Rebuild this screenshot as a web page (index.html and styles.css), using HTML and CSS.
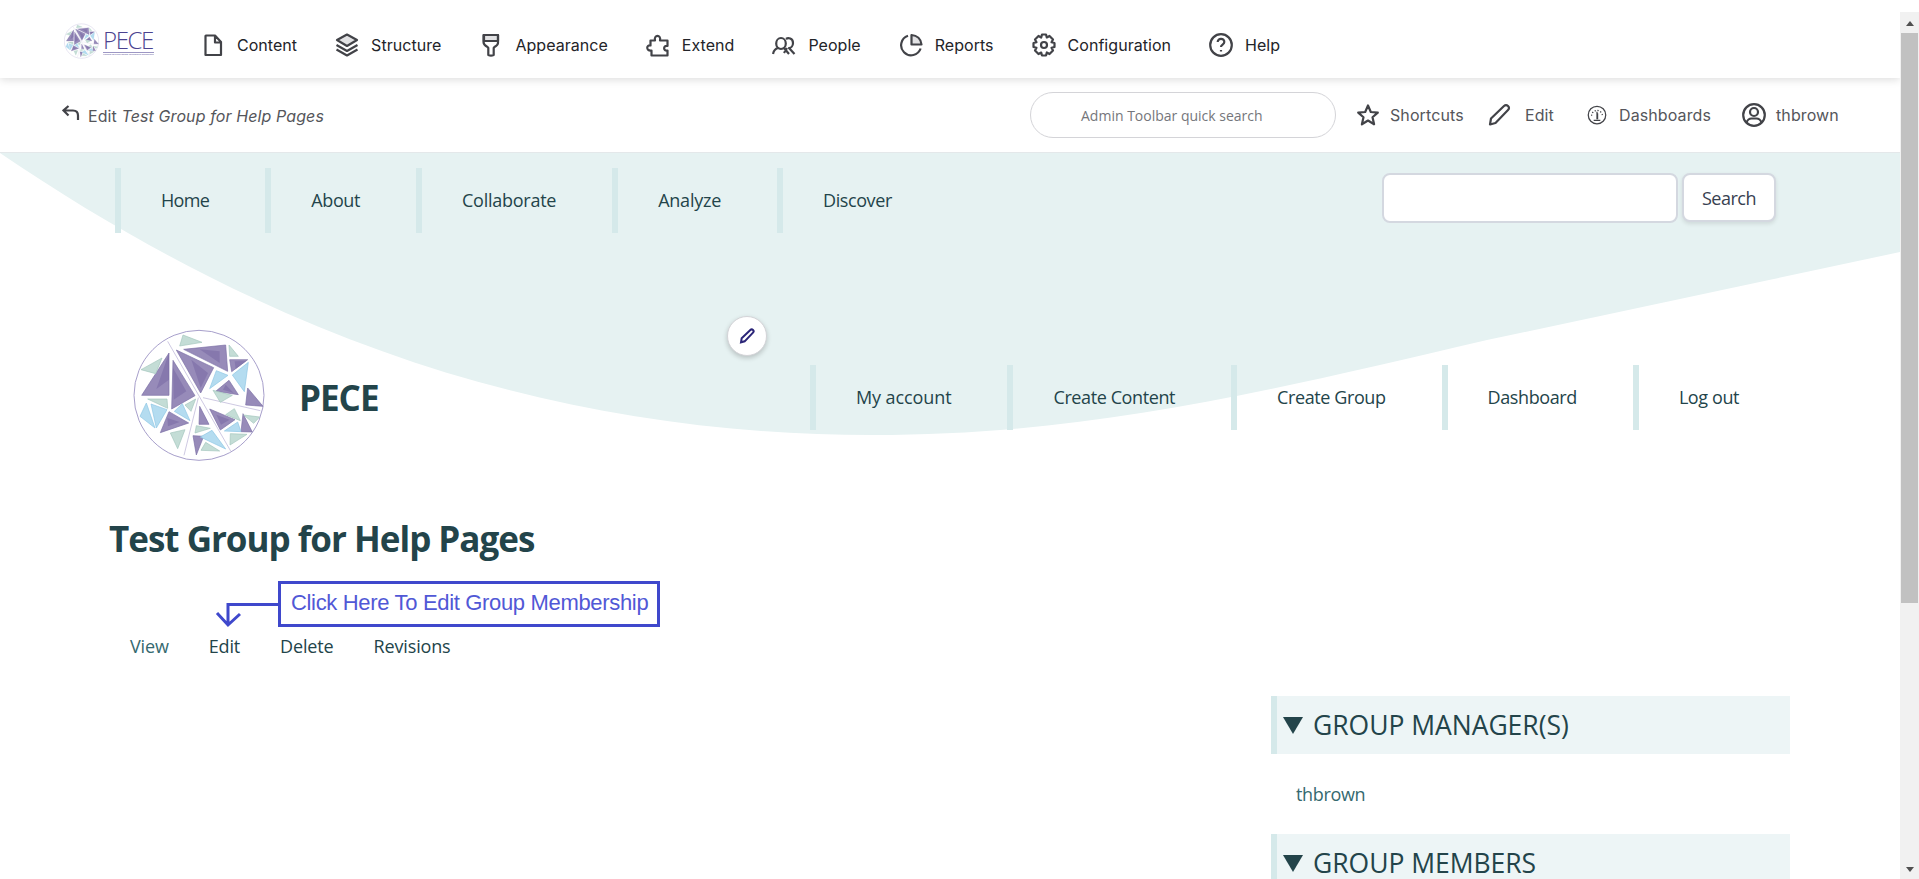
FILE: index.html
```html
<!DOCTYPE html>
<html lang="en">
<head>
<meta charset="utf-8">
<title>Test Group for Help Pages | PECE</title>
<link rel="stylesheet" href="styles.css">
</head>
<body>
<svg class="defs" aria-hidden="true">
  <symbol id="mosaic" viewBox="40 58 396 396">
    <circle cx="238" cy="257" r="195" fill="#fff" stroke="#a79fcb" stroke-width="3"/>
    <g fill="none" stroke="#b5aed3" stroke-width="2">
      <path d="M144 95 333 424M236 264 193 437M250 264 422 303"/>
    </g>
    <g fill="#978bb9" stroke="#7b6fa6" stroke-width="2">
      <path d="M148 130V257H66ZM160 152 226 258 156 298ZM170 121 282 174 243 250ZM192 119 318 106 324 185ZM330 150 384 150 336 186ZM328 212 356 255 288 245ZM384 235 430 290 378 286ZM148 306 207 340 122 369ZM240 290 268 344 238 344ZM270 298 346 330 302 361ZM220 378 252 380 230 436ZM370 312 398 367 364 366Z"/>
    </g>
    <g fill="#71629f" opacity=".45">
      <path d="M148 130V210L110 238ZM160 175 200 245 162 270ZM215 150 265 190 243 235ZM240 119 300 125 300 160ZM345 155 380 154 348 178ZM318 225 342 250 310 240ZM143 325 180 337 145 350ZM290 315 330 330 304 345Z"/>
    </g>
    <g fill="#b4dcf0" stroke="#8cc5e4" stroke-width="2">
      <path d="M290 183 325 197 270 237ZM386 158 374 246 338 196ZM80 280 106 355 61 320ZM94 283 142 300 110 355ZM188 282 211 333 164 305ZM277 362 318 418 242 382ZM354 337 364 366 314 364Z"/>
    </g>
    <g fill="#c4ddd6" stroke="#a3c6bc" stroke-width="2">
      <path d="M190 76 247 98 180 109ZM328 106 356 140 330 140ZM127 145 108 192 64 180ZM280 242 338 257 302 278ZM84 268 142 268 144 296ZM228 268 214 305 196 286ZM344 297 362 333 318 315ZM372 316 420 322 402 341ZM230 348 272 356 226 370ZM152 370 196 360 174 417ZM332 372 382 374 331 406ZM258 398 300 424 244 422Z"/>
    </g>
  </symbol>
</svg>

<div class="window">
  <div class="page">
    <nav class="toolbar">
      <a class="brand">
        <svg class="brand-mark"><use href="#mosaic"/></svg>
        <span class="brand-text"><span class="brand-name">PECE</span><span class="brand-tag">Platform for Experimental Collaborative Ethnography</span></span>
      </a>
      <a class="tool"><svg viewBox="0 0 24 24"><path d="M5 2.500h9l6 6.500V22H4.500V3ZM14 2.500V9.500h6"/></svg><span>Content</span></a>
      <a class="tool"><svg viewBox="0 0 24 24"><path class="tint" d="M12 1.500 22 7 12 13 2 7Z"/><path d="m1.500 12 10.500 6 10.500-6M1.500 16.500 12 22.500l10.500-6"/></svg><span>Structure</span></a>
      <a class="tool"><svg viewBox="0 0 24 24"><path class="tint" d="M5 2h14v6H5z"/><path d="M6 2h13v8q0 2-3.500 4l-.8 1v7q-2.700 1.200-5.400 0v-7L8.500 14Q4.500 12 4.500 9V2ZM8 8h11"/></svg><span>Appearance</span></a>
      <a class="tool"><svg viewBox="0 0 24 24"><path d="M4.500 7.500H9C7.500 1.300 15.500 1.300 14 7.500H21.500V13C17 12 17 18.500 21.500 17.500V22.500H5.500V17.500C0 18.500 0 11.500 4.500 12.500Z"/></svg><span>Extend</span></a>
      <a class="tool"><svg viewBox="0 0 24 24"><ellipse cx="9" cy="10.500" rx="4.800" ry="5.500"/><path d="M1 21q1-5 5-6M12 15l5 6M14 6c2-1.500 7-1 7 4 0 3-2 5-4 5l5.500 6M15 15l-3 5"/></svg><span>People</span></a>
      <a class="tool"><svg viewBox="0 0 24 24"><path d="M9 2.800a10 10 0 1 0 12.600 12.700"/><path class="tint" d="M12.500 2v9.500h10C22 6 18 2.500 12.500 2Z"/></svg><span>Reports</span></a>
      <a class="tool"><svg viewBox="0 0 24 24"><path d="M10 1.500h4l.8 3 2.700-1.500 3.500 3.500-1.500 2.700 3 .8v4l-3 .8 1.500 2.700-3.500 3.500-2.700-1.500-.8 3h-4l-.8-3L6.500 21 3 17.500l1.500-2.700-3-.8v-4l3-.8L3 6.500 6.500 3l2.700 1.500Z"/><circle cx="12" cy="12" r="3"/></svg><span>Configuration</span></a>
      <a class="tool"><svg viewBox="0 0 24 24"><circle cx="12" cy="12" r="10.800"/><path d="M8.700 9c0-4.500 6.800-4 6.600 0 0 2.500-3.300 2.600-3.300 5M12 17v1.600"/></svg><span>Help</span></a>
    </nav>

    <div class="subbar">
      <a class="back"><svg viewBox="0 0 18 16"><path d="M6.500 1 1.500 5.500l5 5M2 5.500h9q5 0 5 5V15"/></svg><span>Edit <em>Test Group for Help Pages</em></span></a>
      <div class="quick">Admin Toolbar quick search</div>
      <a class="sub shortcuts"><svg viewBox="0 0 24 24"><path d="m12 2.500 2.800 6.500 7 .6-5.300 4.700 1.600 7L12 17.500l-6.100 3.800 1.600-7L2.200 9.600l7-.6Z"/></svg><span>Shortcuts</span></a>
      <a class="sub edit"><svg viewBox="0 0 24 24"><path d="m3 21.500 1-6L17 3q2-2 4 0t0 4L8.500 20Z"/></svg><span>Edit</span></a>
      <a class="sub dash"><svg class="gauge" viewBox="0 0 24 24"><circle cx="12" cy="12" r="10.500"/><path d="M12 8v9M8 18.500h8M12.700 10v7" /><path stroke-dasharray="1.500 2" d="M5.500 13a6.500 6.500 0 0 1 13 0"/></svg><span>Dashboards</span></a>
      <a class="sub user"><svg viewBox="0 0 24 24"><circle cx="12" cy="12" r="10.800"/><circle cx="12" cy="9" r="4"/><path d="M4.500 19.500q1.500-4 5-4h5q3.500 0 5 4"/></svg><span>thbrown</span></a>
    </div>

    <header class="header">
      <svg class="wave" viewBox="0 153 1900 283" preserveAspectRatio="none"><path d="M0 153C290 350 570 435 873 435C1080 435 1250 396 1487 340L1769 280 1900 252V153Z"/></svg>
      <div class="top-row">
        <nav class="menu primary"><a>Home</a><a>About</a><a class="wide">Collaborate</a><a class="wide">Analyze</a><a>Discover</a></nav>
        <form class="search"><input type="text" aria-label="Search"><button type="button">Search</button></form>
      </div>
      <div class="site-row">
        <svg class="logo"><use href="#mosaic"/></svg>
        <strong class="site-name">PECE</strong>
        <span class="contextual"><svg viewBox="0 0 24 24"><path d="m3 21.500 1-6L17 3q2-2 4 0t0 4L8.500 20Z"/></svg></span>
        <nav class="menu account"><a class="wide">My account</a><a>Create Content</a><a>Create Group</a><a>Dashboard</a><a>Log out</a></nav>
      </div>
    </header>

    <main class="main">
      <h1>Test Group for Help Pages</h1>
      <nav class="tabs"><a class="active">View</a><a>Edit</a><a>Delete</a><a>Revisions</a>
        <div class="callout"><svg viewBox="0 0 64 30"><path d="M64 9.500H13V29M2 18l11 12L25 19"/></svg><span>Click Here To Edit Group Membership</span></div>
      </nav>
      <aside class="side">
        <h2><i></i>GROUP MANAGER(S)</h2>
        <a>thbrown</a>
        <h2><i></i>GROUP MEMBERS</h2>
      </aside>
    </main>
  </div>
  <div class="scrollbar"><i class="up"></i><div class="thumb"></div><i class="down"></i></div>
</div>
</body>
</html>
```

FILE: styles.css
```css
* { box-sizing: border-box; }
body { margin: 0; background: #fff; color: #23444a; font: 18px/24px "Open Sans", sans-serif; overflow: hidden; }
.defs { position: absolute; width: 0; height: 0; }
.window { display: flex; width: 1919px; height: 879px; overflow: hidden; }
.page { width: 1900px; height: 879px; overflow: hidden; }

.toolbar { position: relative; z-index: 2; display: flex; align-items: center; gap: 38px; height: 78px; padding: 11px 0 0 64px; background: #fff; box-shadow: 0 2px 8px rgba(0,0,0,.13); font: 16px/20px Inter, sans-serif; letter-spacing: .04px; color: #232429; }
.brand { display: flex; gap: 4px; width: 99px; height: 44px; margin-top: 1px; }
.brand-mark { width: 35px; height: 36px; }
.brand-text { display: flex; flex-direction: column; padding-top: 5px; color: #4b4390; }
.brand-name { font: 300 24px/24px "Open Sans", sans-serif; letter-spacing: -1.400px; }
.brand-tag { width: 51px; font: 2px/3px "Open Sans", sans-serif; white-space: nowrap; border-top: 1px solid #9d97c4; overflow: hidden; }
.tool { display: flex; align-items: center; gap: 12px; }
.tool svg, .sub svg { width: 24px; height: 24px; fill: none; stroke: #424348; stroke-width: 2.200; stroke-linejoin: round; }
.tool svg .tint { fill: #e2e2e4; }

.subbar { display: flex; align-items: center; height: 75px; padding: 2px 0 0 62px; border-bottom: 1px solid #e4e8ea; font: 16px/20px Inter, sans-serif; color: #55565b; }
.back { display: flex; gap: 8px; width: 968px; letter-spacing: .1px; }
.back svg { width: 18px; height: 16px; margin-top: -1px; fill: none; stroke: #424348; stroke-width: 2.200; }
.quick { width: 306px; height: 46px; padding-left: 50px; margin-top: -3px; border: 1px solid #d4d4d8; border-radius: 23px; font: 14px/45px "Open Sans", sans-serif; color: #75767b; }
.sub { display: flex; align-items: center; gap: 10px; margin-top: -2px; letter-spacing: .1px; }
.shortcuts { width: 131px; margin-left: 20px; }
.edit { width: 100px; gap: 14px; }
.dash { width: 155px; gap: 12px; }
.sub .gauge { width: 20px; stroke-width: 1.500; }

.header { position: relative; height: 337px; }
.wave { position: absolute; left: 0; top: 0; width: 1900px; height: 283px; fill: #e6f2f2; }
.top-row, .site-row { position: relative; display: flex; }
.top-row { padding: 15px 0 0 115px; height: 163px; }
.menu { display: flex; gap: 16px; height: 65px; letter-spacing: -.4px; white-space: nowrap; }
.menu a { padding: 20px 40px 0; border-left: 6px solid #d5e9ea; }
.primary a:first-child { letter-spacing: -.65px; }
.primary .wide { letter-spacing: -.25px; }
.account .wide { letter-spacing: -.1px; }
.search { display: flex; gap: 4px; position: absolute; left: 1382px; top: 20px; }
.search input { width: 296px; height: 50px; border: 2px solid #d4d8e0; border-radius: 8px; background: #fff; }
.search button { width: 94px; height: 49px; padding: 0; border: 2px solid #d4d8e0; border-radius: 8px; background: #fff; box-shadow: 0 2px 4px rgba(0,0,0,.1); font: 18px/24px "Open Sans", sans-serif; letter-spacing: -.5px; color: #374151; }
.site-row { padding-left: 133px; }
.logo { width: 132px; height: 132px; margin-top: 13px; }
.site-name { margin: 58px 0 0 34px; width: 428px; font-size: 35px; line-height: 48px; letter-spacing: -1px; }
.contextual { display: flex; align-items: center; justify-content: center; width: 40px; height: 40px; border: 1px solid #d4d4d8; border-radius: 50%; background: #fff; box-shadow: 0 2px 5px rgba(0,0,0,.2); }
.contextual svg { width: 16px; height: 16px; fill: none; stroke: #2b2578; stroke-width: 3; }
.account { margin: 49px 0 0 43px; }

.main { position: relative; }
h1 { margin: 0; padding: 25px 0 0 109px; font-size: 35px; line-height: 48px; letter-spacing: -1px; }
.tabs { position: relative; display: flex; gap: 40px; padding: 71px 0 1px 130px; letter-spacing: -.15px; }
.active, .side a { color: #35696f; }
.callout { position: absolute; left: 215px; top: 18px; display: flex; letter-spacing: 0; }
.callout svg { width: 64px; height: 30px; margin-top: 14px; fill: none; stroke: #3f48cc; stroke-width: 3; overflow: visible; }
.callout span { width: 382px; height: 46px; margin-left: -1px; padding-left: 10px; border: 3px solid #3f48cc; font: 22px/37px "Liberation Sans", sans-serif; letter-spacing: -.33px; color: #5158d6; white-space: nowrap; }
.side { width: 519px; margin: 37px 0 0 1271px; }
.side h2 { display: flex; align-items: center; gap: 10px; height: 58px; margin: 0; padding-left: 6px; border-left: 6px solid #d5e9ea; background: #edf5f6; font-size: 26.500px; font-weight: 400; letter-spacing: -.03px; }
.side h2 i { border: 10px solid transparent; border-top: 17px solid #23444a; border-bottom: 0; }
.side a { display: block; height: 80px; padding: 28px 0 0 25px; letter-spacing: -.35px; }

.scrollbar { display: flex; flex-direction: column; align-items: center; width: 19px; height: 867px; margin-top: 12px; padding-bottom: 7px; background: #f1f1f1; }
.scrollbar i { border: 4px solid transparent; }
.scrollbar .up { border-bottom: 5px solid #505050; border-top: 0; margin-top: 9px; }
.scrollbar .down { border-top: 5px solid #505050; border-bottom: 0; margin-top: auto; }
.thumb { width: 17px; height: 570px; margin-top: 7px; background: #c1c1c1; }
```
